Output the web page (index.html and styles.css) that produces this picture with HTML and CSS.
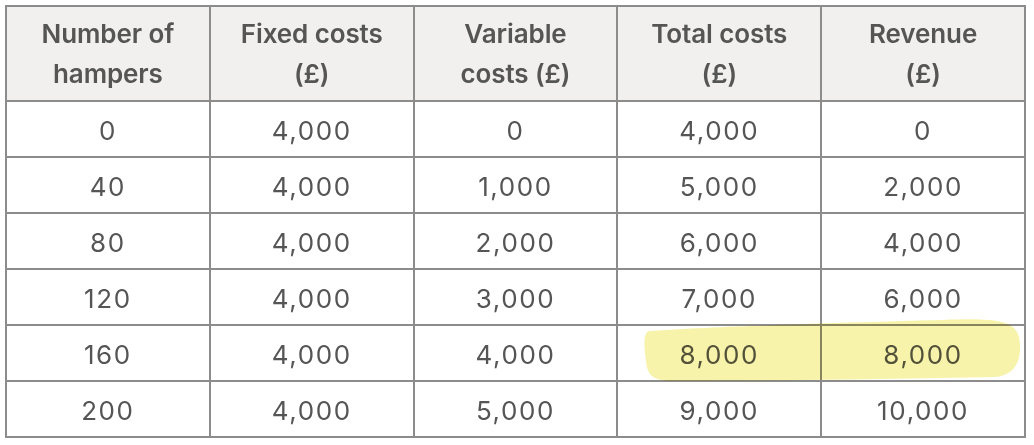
FILE: index.html
```html
<!DOCTYPE html>
<html>
<head>
<meta charset="utf-8">
<link rel="stylesheet" href="styles.css">
</head>
<body>
<div class="wrap">
  <table class="costs">
    <thead>
      <tr>
        <th>Number of<br>hampers</th>
        <th>Fixed costs<br>(£)</th>
        <th>Variable<br>costs (£)</th>
        <th>Total costs<br>(£)</th>
        <th>Revenue<br>(£)</th>
      </tr>
    </thead>
    <tbody>
      <tr><td>0</td><td>4,000</td><td>0</td><td>4,000</td><td>0</td></tr>
      <tr><td>40</td><td>4,000</td><td>1,000</td><td>5,000</td><td>2,000</td></tr>
      <tr><td>80</td><td>4,000</td><td>2,000</td><td>6,000</td><td>4,000</td></tr>
      <tr><td>120</td><td>4,000</td><td>3,000</td><td>7,000</td><td>6,000</td></tr>
      <tr class="hl"><td>160</td><td>4,000</td><td>4,000</td><td>8,000</td><td>8,000</td></tr>
      <tr><td>200</td><td>4,000</td><td>5,000</td><td>9,000</td><td>10,000</td></tr>
    </tbody>
  </table>
  <svg class="marker" width="380" height="66" viewBox="0 0 380 66">
    <path d="M6 14 C60 10 180 6 300 3 C350 1 372 3 376 20 C380 40 374 58 352 60 C250 62 120 64 30 64 C10 64 4 58 3 44 C1 30 0 16 6 14 Z" fill="#f8f3aa"/>
  </svg>
</div>
</body>
</html>
```
FILE: styles.css
```css
html, body {
  margin: 0;
  padding: 0;
  background: #ffffff;
}
.wrap {
  position: relative;
  padding: 5px 0 0 5px;
  width: 1034px;
  height: 445px;
  box-sizing: border-box;
}
.costs {
  border-collapse: collapse;
  table-layout: fixed;
  width: 1021px;
  font-family: "Inter", "Liberation Sans", sans-serif;
  color: #555555;
}
.costs th, .costs td {
  border: 2px solid #8c8c8c;
  text-align: center;
  padding: 0;
}
.costs th {
  background: #f1f0ee;
  font-weight: 600;
  font-size: 26px;
  line-height: 40px;
  height: 93px;
  letter-spacing: -0.1px;
}
.costs td {
  font-weight: 400;
  font-size: 26px;
  height: 51px;
  line-height: 30px;
  letter-spacing: 1.6px;
  padding-top: 3px;
}
.marker {
  position: absolute;
  left: 643px;
  top: 317px;
  mix-blend-mode: multiply;
}
```
